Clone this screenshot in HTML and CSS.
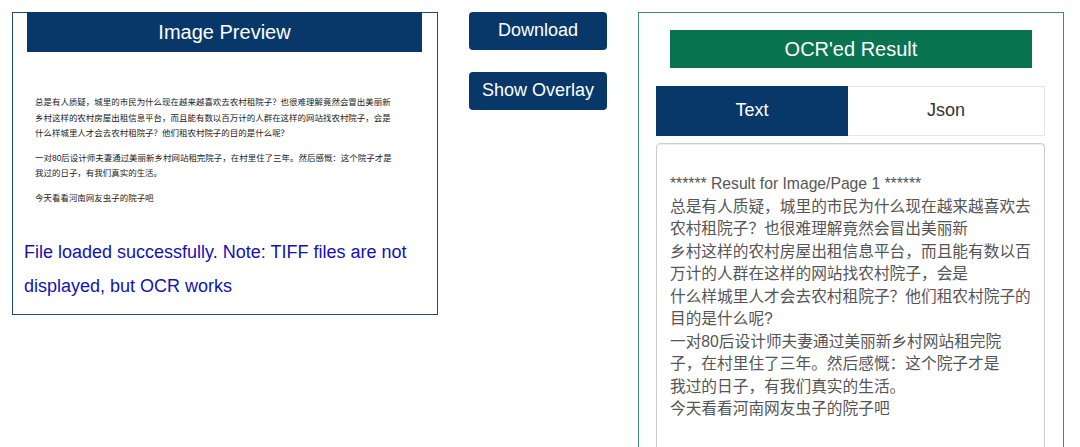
FILE: index.html
```html
<!DOCTYPE html>
<html lang="zh">
<head>
<meta charset="utf-8">
<title>OCR</title>
<link rel="stylesheet" href="styles.css">
</head>
<body>
<main class="page">
  <section class="preview">
    <h2 class="preview-title">Image Preview</h2>
    <div class="doc">
      <p>总是有人质疑，城里的市民为什么现在越来越喜欢去农村租院子？也很难理解竟然会冒出美丽新<br>乡村这样的农村房屋出租信息平台，而且能有数以百万计的人群在这样的网站找农村院子，会是<br>什么样城里人才会去农村租院子？他们租农村院子的目的是什么呢？</p>
      <p>一对80后设计师夫妻通过美丽新乡村网站租完院子，在村里住了三年。然后感慨：这个院子才是<br>我过的日子，有我们真实的生活。</p>
      <p>今天看看河南网友虫子的院子吧</p>
    </div>
    <p class="note">File loaded successfully. Note: TIFF files are not displayed, but OCR works</p>
  </section>
  <div class="actions">
    <button class="btn">Download</button>
    <button class="btn">Show Overlay</button>
  </div>
  <section class="result">
    <h2 class="result-title">OCR'ed Result</h2>
    <div class="tabs">
      <div class="tab active">Text</div>
      <div class="tab">Json</div>
    </div>
    <div class="output">****** Result for Image/Page 1 ******<br>总是有人质疑，城里的市民为什么现在越来越喜欢去农村租院子？也很难理解竟然会冒出美丽新<br>乡村这样的农村房屋出租信息平台，而且能有数以百万计的人群在这样的网站找农村院子，会是<br>什么样城里人才会去农村租院子？他们租农村院子的目的是什么呢?<br>一对80后设计师夫妻通过美丽新乡村网站租完院<br>子，在村里住了三年。然后感慨：这个院子才是<br>我过的日子，有我们真实的生活。<br>今天看看河南网友虫子的院子吧</div>
  </section>
</main>
</body>
</html>
```
FILE: styles.css
```css
* { box-sizing: border-box; }
html, body { margin: 0; height: 447px; overflow: hidden; background: #fff; }
body { font-family: "Liberation Sans", "Noto Sans CJK SC", sans-serif; }
.page { display: flex; align-items: flex-start; padding: 12px 0 0 12px; }
.preview { width: 426px; height: 303px; border: 1px solid #1f4a75; padding: 0 15px 0 14px; flex: none; }
.preview-title { margin: -1px 0 0; height: 40px; background: #08386a; color: #fff; font-size: 20px; font-weight: 400; line-height: 41px; text-align: center; }
.doc { padding: 43px 0 0 8px; font-size: 8.47px; line-height: 15.5px; color: #222; }
.doc p { margin: 0 0 9px; white-space: nowrap; }
.note { margin: 30px 0 0 -3px; width: 400px; font-size: 18px; line-height: 33.5px; color: #1212b4; }
.actions { display: flex; flex-direction: column; gap: 22px; width: 138px; margin-left: 31px; flex: none; }
.btn { height: 38px; padding: 0 0 2px; border: 0; border-radius: 4px; background: #08386a; color: #fff; font: 18px/36px "Liberation Sans", sans-serif; text-align: center; }
.result { width: 426px; height: 480px; margin-left: 31px; border: 1px solid #3b8f78; padding: 17px 17px 0; flex: none; }
.result-title { margin: 0 14px 0 14px; height: 38px; background: #0a7350; color: #fff; font-size: 20px; font-weight: 400; line-height: 38px; text-align: center; }
.tabs { display: flex; margin-top: 18px; width: 389px; height: 50px; border: 1px solid #e6e6e6; }
.tab { flex: 1; margin: -1px 0; font-size: 18px; line-height: 48px; text-align: center; color: #333; }
.tab.active { flex: none; width: 192px; margin-left: -1px; background: #08386a; color: #fff; }
.output { margin-top: 7px; width: 389px; height: 330px; border: 1px solid #ccc; border-radius: 4px; padding: 29px 13px 0; font-size: 15.7px; line-height: 22.5px; color: #555; box-shadow: inset 0 1px 1px rgba(0,0,0,.075); }
```
